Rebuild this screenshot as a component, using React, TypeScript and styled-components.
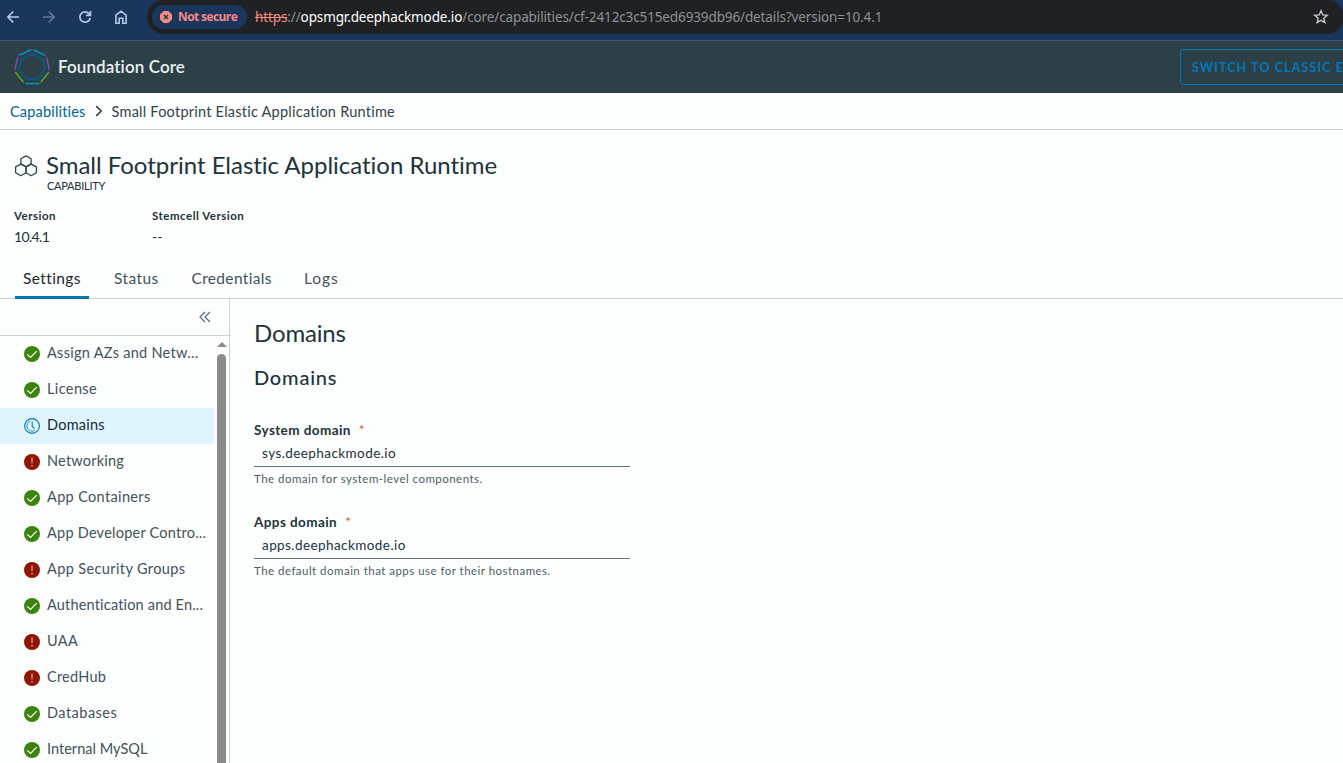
import React from "react";
import styled, { createGlobalStyle, css } from "styled-components";

const GlobalStyle = createGlobalStyle`
  * { box-sizing: border-box; }
  html, body, #root { height: 100%; }
  body {
    margin: 0;
    overflow: hidden;
    background: #fcfdfd;
    color: #21333b;
    font-family: Lato, "Open Sans", sans-serif;
    font-size: 14px;
    font-variant-ligatures: none;
  }
  h1, h2, h3, p { margin: 0; font-weight: 400; }
  ul { margin: 0; padding: 0; list-style: none; }
`;

const Page = styled.div`
  display: flex;
  flex-direction: column;
  width: 1343px;
  height: 763px;
  overflow: hidden;
`;

const BrowserBar = styled.div`
  flex: none;
  display: flex;
  align-items: flex-start;
  height: 41px;
  background: #1b365d;
  border-bottom: 1px solid #3b557f;
`;

const NavButtons = styled.div`
  flex: none;
  display: flex;
  gap: 20px;
  width: 147px;
  padding: 9px 0 0 5px;
  svg { display: block; }
`;

const AddressBar = styled.div`
  flex: none;
  display: flex;
  align-items: center;
  width: 1197px;
  height: 34px;
  padding: 0 15px 0 5px;
  border-radius: 17px;
  background: #202124;
`;

const SecurityChip = styled.div`
  display: flex;
  align-items: center;
  gap: 6px;
  width: 95px;
  height: 24px;
  padding-left: 8px;
  border-radius: 12px;
  background: #1b365d;
  color: #f28b82;
  font: 700 12px/24px "Open Sans", sans-serif;
  letter-spacing: -0.6px;
  white-space: nowrap;
`;

const Url = styled.div`
  flex: 1;
  margin-left: 8px;
  color: #8f9195;
  font: 400 13.5px/34px "Noto Sans", "Open Sans", sans-serif;
  letter-spacing: -0.12px;
  white-space: nowrap;
`;

const Scheme = styled.span`
  color: #f28b82;
  text-decoration: line-through;
`;

const Host = styled.span`
  color: #ffffff;
`;

const AppHeader = styled.header`
  flex: none;
  display: flex;
  align-items: center;
  height: 52px;
  padding-left: 13px;
  background: #2d4048;
`;

const ProductName = styled.div`
  flex: 1;
  margin: -1px 0 0 7px;
  color: #eaf1f3;
  font-size: 17px;
  font-weight: 600;
  line-height: 24px;
  letter-spacing: 0.1px;
`;

const SwitchButton = styled.button`
  flex: none;
  width: 180px;
  height: 36px;
  margin-right: -17px;
  padding: 0 0 0 11px;
  border: 1px solid #0079b8;
  border-radius: 3px;
  background: transparent;
  color: #0079b8;
  font: 700 12.5px/33px Lato, sans-serif;
  letter-spacing: 1.1px;
  text-align: left;
  white-space: nowrap;
`;

const Breadcrumb = styled.nav`
  flex: none;
  display: flex;
  align-items: center;
  height: 37px;
  padding: 0 0 0 10px;
  border-bottom: 1px solid #c8d1d6;
  svg { margin: 0 8px; }
`;

const Crumb = styled.span<{ $link?: boolean }>`
  color: ${(p) => (p.$link ? "#00648f" : "#31434b")};
  font-size: 14.5px;
  letter-spacing: ${(p) => (p.$link ? "0.18px" : "0.24px")};
`;

const Summary = styled.section`
  flex: none;
  height: 136px;
  padding: 20px 0 0 14px;
`;

const TitleRow = styled.div`
  display: flex;
  svg { flex: none; margin-top: 4px; }
`;

const TitleText = styled.div`
  margin: -1px 0 0 8px;
`;

const Title = styled.h1`
  font-size: 24px;
  line-height: 32px;
  letter-spacing: -0.02px;
`;

const Kind = styled.div`
  margin-left: 1px;
  font-size: 11px;
  line-height: 10px;
  letter-spacing: -0.25px;
`;

const Facts = styled.div`
  display: flex;
  margin-top: 17px;
`;

const Fact = styled.div`
  width: 138px;
`;

const FactLabel = styled.div`
  font-size: 11.5px;
  font-weight: 700;
  line-height: 16px;
  letter-spacing: 0.5px;
`;

const FactValue = styled.div<{ $ls: number }>`
  margin-top: 4px;
  font-size: 14px;
  line-height: 18px;
  letter-spacing: ${(p) => p.$ls}px;
`;

const Tabs = styled.div`
  flex: none;
  display: flex;
  gap: 17px;
  height: 33px;
  padding-left: 15px;
  border-bottom: 1px solid #c8d1d6;
`;

const Tab = styled.div<{ $active?: boolean; $width: number; $ls: number }>`
  width: ${(p) => p.$width}px;
  height: 33px;
  padding-left: 8px;
  color: #41535c;
  font-size: 15.5px;
  line-height: 25px;
  letter-spacing: ${(p) => p.$ls}px;
  white-space: nowrap;
  ${(p) =>
    p.$active &&
    css`
      color: #1b2a32;
      border-bottom: 3px solid #0077ad;
    `}
`;

const Body = styled.div`
  flex: 1;
  display: flex;
  min-height: 0;
`;

const Sidebar = styled.aside`
  flex: none;
  display: flex;
  flex-direction: column;
  width: 230px;
  border-right: 1px solid #c8d1d6;
`;

const CollapseRow = styled.div`
  flex: none;
  display: flex;
  justify-content: flex-end;
  height: 37px;
  padding: 12px 17px 0 0;
  border-bottom: 1px solid #c8d1d6;
`;

const SidebarScroll = styled.div`
  flex: 1;
  display: flex;
  min-height: 0;
  overflow: hidden;
`;

const SectionList = styled.ul`
  width: 214px;
`;

const SectionItem = styled.li<{ $selected?: boolean }>`
  display: flex;
  align-items: flex-start;
  height: 36px;
  padding: 10px 0 0 24px;
  background: ${(p) => (p.$selected ? "#dff4fd" : "transparent")};
  color: ${(p) => (p.$selected ? "#1b2a32" : "#41535c")};
  svg { flex: none; }
`;

const SectionLabel = styled.span<{ $ls: number }>`
  margin: -2px 0 0 7px;
  font-size: 14.5px;
  line-height: 18px;
  letter-spacing: ${(p) => p.$ls}px;
  white-space: nowrap;
`;

const ScrollTrack = styled.div`
  display: flex;
  flex-direction: column;
  align-items: center;
  width: 15px;
  padding-top: 6px;
`;

const ScrollArrow = styled.div`
  border: 5px solid transparent;
  border-top: 0;
  border-bottom: 5px solid #8b8b8b;
`;

const ScrollThumb = styled.div`
  flex: 1;
  width: 9px;
  margin-top: 7px;
  border-radius: 5px 5px 0 0;
  background: #8b8b8b;
`;

const Content = styled.main`
  flex: 1;
  padding: 20px 0 0 24px;
`;

const PaneTitle = styled.h2`
  font-size: 24px;
  line-height: 28px;
  letter-spacing: -0.15px;
`;

const GroupTitle = styled.h3`
  margin-top: 16px;
  font-size: 20px;
  font-weight: 500;
  line-height: 28px;
  letter-spacing: 0.8px;
`;

const Field = styled.div`
  width: 376px;
  height: 92px;
`;

const Fields = styled.div`
  padding-top: 30px;
`;

const FieldLabel = styled.div`
  color: #21333b;
  font-size: 13.5px;
  font-weight: 700;
  line-height: 18px;
  letter-spacing: 0.42px;
`;

const Required = styled.span`
  margin-left: 8px;
  color: #cf5a1c;
  font-weight: 400;
`;

const FieldValue = styled.div`
  height: 28px;
  padding-left: 8px;
  border-bottom: 1px solid #5d737e;
  font-size: 13.5px;
  line-height: 28px;
  letter-spacing: 0.42px;
`;

const FieldHelp = styled.div`
  margin-top: 3px;
  color: #4d5f68;
  font-size: 11.5px;
  line-height: 18px;
  letter-spacing: 0.47px;
`;

const BackIcon = () => (
  <svg width="16" height="16" viewBox="0 0 16 16" fill="none" stroke="#b4c8e8" strokeWidth="1.6">
    <path d="M14 8H3M8.2 2.6 2.8 8l5.4 5.4" />
  </svg>
);

const ForwardIcon = () => (
  <svg width="16" height="16" viewBox="0 0 16 16" fill="none" stroke="#5d779e" strokeWidth="1.6">
    <path d="M2 8h11M7.8 2.6 13.2 8l-5.4 5.4" />
  </svg>
);

const ReloadIcon = () => (
  <svg width="16" height="16" viewBox="0 0 16 16" fill="none" stroke="#b4c8e8" strokeWidth="1.7">
    <path d="M13.2 8.8A5.2 5.2 0 1 1 12 4.6L13 5.8" />
    <path d="M13.4 2v4.4H9" />
  </svg>
);

const HomeIcon = () => (
  <svg width="16" height="16" viewBox="0 0 16 16" fill="none" stroke="#b4c8e8" strokeWidth="1.6">
    <path d="M2.9 14.2V6.2L8 2.2l5.1 4v8H9.8V9.3H6.2v4.9z" />
  </svg>
);

const NotSecureIcon = () => (
  <svg width="12" height="12" viewBox="0 0 12 12">
    <path d="M3.6 0h4.8L12 3.6v4.8L8.4 12H3.6L0 8.4V3.6z" fill="#f28b82" />
    <path d="m4 4 4 4M8 4 4 8" stroke="#1b365d" strokeWidth="1.3" />
  </svg>
);

const StarIcon = () => (
  <svg width="16" height="16" viewBox="0 0 16 16" fill="none" stroke="#c7c7c7" strokeWidth="1.4">
    <path d="m8 1.8 1.75 4.1 4.45.4-3.4 2.9 1.05 4.4L8 11.3l-3.85 2.3L5.2 9.2 1.8 6.3l4.45-.4z" />
  </svg>
);

const Logo = () => (
  <svg width="38" height="38" viewBox="0 0 38 38" fill="none" strokeWidth="1.5">
    <path d="M19 6 30.2 11.8 32.3 21.2 25.4 31H12.7L6 21.2 8.2 11.8z" stroke="#005f8f" />
    <path d="M6 7.4 18 1.7M20.2 1.7l12 5.7" stroke="#0095c8" />
    <path d="m4.8 9.3-3 12.4M33.4 9.3l3 12.4" stroke="#7a4fa3" />
    <path d="m2.3 24 8.2 10.2M36 24l-8.4 10.2" stroke="#62a420" />
    <path d="M12.3 35.5h13.6" stroke="#0095c8" />
  </svg>
);

const CrumbArrow = () => (
  <svg width="10" height="12" viewBox="0 0 10 12" fill="none" stroke="#31434b" strokeWidth="1.6">
    <path d="m2.2 1.2 5 4.8-5 4.8" />
  </svg>
);

const CapabilityIcon = () => (
  <svg width="24" height="24" viewBox="0 0 24 24" fill="none" stroke="#31434b" strokeWidth="1.3" strokeLinejoin="round">
    <path d="M12 1.9 17.1 4.7v5.1L12 12.7 6.9 9.8V4.7z" />
    <path d="M6.8 10.1 12 12.9v5.9l-5.2 2.9-5.2-2.9v-5.9z" />
    <path d="m17.2 10.1 5.2 2.8v5.9l-5.2 2.9-5.2-2.9v-5.9z" />
  </svg>
);

const CollapseIcon = () => (
  <svg width="14" height="12" viewBox="0 0 14 12" fill="none" stroke="#566871" strokeWidth="1.2">
    <path d="M7 1 2 6l5 5M12 1 7 6l5 5" />
  </svg>
);

type Status = "ok" | "pending" | "error";

const StatusIcon = ({ status }: { status: Status }) => {
  if (status === "pending") {
    return (
      <svg width="16" height="16" viewBox="0 0 16 16" fill="none" stroke="#0079ad">
        <circle cx="8" cy="8" r="7.4" strokeWidth="1.1" />
        <path d="M8.2 3.8v4.7l2.4 2.2" strokeWidth="1.1" />
        <path d="M10.8 12.4A5.2 5.2 0 1 1 6.6 3" strokeWidth="0.8" />
      </svg>
    );
  }
  if (status === "error") {
    return (
      <svg width="16" height="16" viewBox="0 0 16 16">
        <circle cx="8" cy="8" r="8" fill="#8f1500" />
        <path d="M8 3.4v5.8M8 11v1.6" stroke="#dda79c" strokeWidth="1.3" />
      </svg>
    );
  }
  return (
    <svg width="16" height="16" viewBox="0 0 16 16" fill="none">
      <circle cx="8" cy="8" r="8" fill="#3d840e" />
      <path d="m3.2 8.4 3.3 3 6.2-6.3" stroke="#fff" strokeWidth="1.2" />
    </svg>
  );
};

const sections: { label: string; status: Status; ls: number; selected?: boolean }[] = [
  { label: "Assign AZs and Netw...", status: "ok", ls: 0.28 },
  { label: "License", status: "ok", ls: 0.38 },
  { label: "Domains", status: "pending", ls: 0.25, selected: true },
  { label: "Networking", status: "error", ls: 0.22 },
  { label: "App Containers", status: "ok", ls: 0.35 },
  { label: "App Developer Contro...", status: "ok", ls: 0.24 },
  { label: "App Security Groups", status: "error", ls: 0.38 },
  { label: "Authentication and En...", status: "ok", ls: 0.18 },
  { label: "UAA", status: "error", ls: 0.4 },
  { label: "CredHub", status: "error", ls: 0.25 },
  { label: "Databases", status: "ok", ls: 0.48 },
  { label: "Internal MySQL", status: "ok", ls: 0.02 },
];

const tabs = [
  { label: "Settings", width: 74, ls: 0.4, active: true },
  { label: "Status", width: 60.5, ls: 0.4 },
  { label: "Credentials", width: 95.5, ls: 0.34 },
  { label: "Logs", width: 52, ls: 0.95 },
];

const fields = [
  { label: "System domain", value: "sys.deephackmode.io", help: "The domain for system-level components." },
  { label: "Apps domain", value: "apps.deephackmode.io", help: "The default domain that apps use for their hostnames." },
];

export default function App() {
  return (
    <Page>
      <GlobalStyle />
      <BrowserBar>
        <NavButtons>
          <BackIcon />
          <ForwardIcon />
          <ReloadIcon />
          <HomeIcon />
        </NavButtons>
        <AddressBar>
          <SecurityChip>
            <NotSecureIcon />
            Not secure
          </SecurityChip>
          <Url>
            <Scheme>https</Scheme>://<Host>opsmgr.deephackmode.io</Host>
            /core/capabilities/cf-2412c3c515ed6939db96/details?version=10.4.1
          </Url>
          <StarIcon />
        </AddressBar>
      </BrowserBar>
      <AppHeader>
        <Logo />
        <ProductName>Foundation Core</ProductName>
        <SwitchButton>SWITCH TO CLASSIC E</SwitchButton>
      </AppHeader>
      <Breadcrumb>
        <Crumb $link>Capabilities</Crumb>
        <CrumbArrow />
        <Crumb>Small Footprint Elastic Application Runtime</Crumb>
      </Breadcrumb>
      <Summary>
        <TitleRow>
          <CapabilityIcon />
          <TitleText>
            <Title>Small Footprint Elastic Application Runtime</Title>
            <Kind>CAPABILITY</Kind>
          </TitleText>
        </TitleRow>
        <Facts>
          <Fact>
            <FactLabel>Version</FactLabel>
            <FactValue $ls={-0.65}>10.4.1</FactValue>
          </Fact>
          <Fact>
            <FactLabel>Stemcell Version</FactLabel>
            <FactValue $ls={0}>--</FactValue>
          </Fact>
        </Facts>
      </Summary>
      <Tabs>
        {tabs.map((t) => (
          <Tab key={t.label} $width={t.width} $ls={t.ls} $active={t.active}>
            {t.label}
          </Tab>
        ))}
      </Tabs>
      <Body>
        <Sidebar>
          <CollapseRow>
            <CollapseIcon />
          </CollapseRow>
          <SidebarScroll>
            <SectionList>
              {sections.map((s) => (
                <SectionItem key={s.label} $selected={s.selected}>
                  <StatusIcon status={s.status} />
                  <SectionLabel $ls={s.ls}>{s.label}</SectionLabel>
                </SectionItem>
              ))}
            </SectionList>
            <ScrollTrack>
              <ScrollArrow />
              <ScrollThumb />
            </ScrollTrack>
          </SidebarScroll>
        </Sidebar>
        <Content>
          <PaneTitle>Domains</PaneTitle>
          <GroupTitle>Domains</GroupTitle>
          <Fields>
            {fields.map((f) => (
              <Field key={f.label}>
                <FieldLabel>
                  {f.label}
                  <Required>*</Required>
                </FieldLabel>
                <FieldValue>{f.value}</FieldValue>
                <FieldHelp>{f.help}</FieldHelp>
              </Field>
            ))}
          </Fields>
        </Content>
      </Body>
    </Page>
  );
}
